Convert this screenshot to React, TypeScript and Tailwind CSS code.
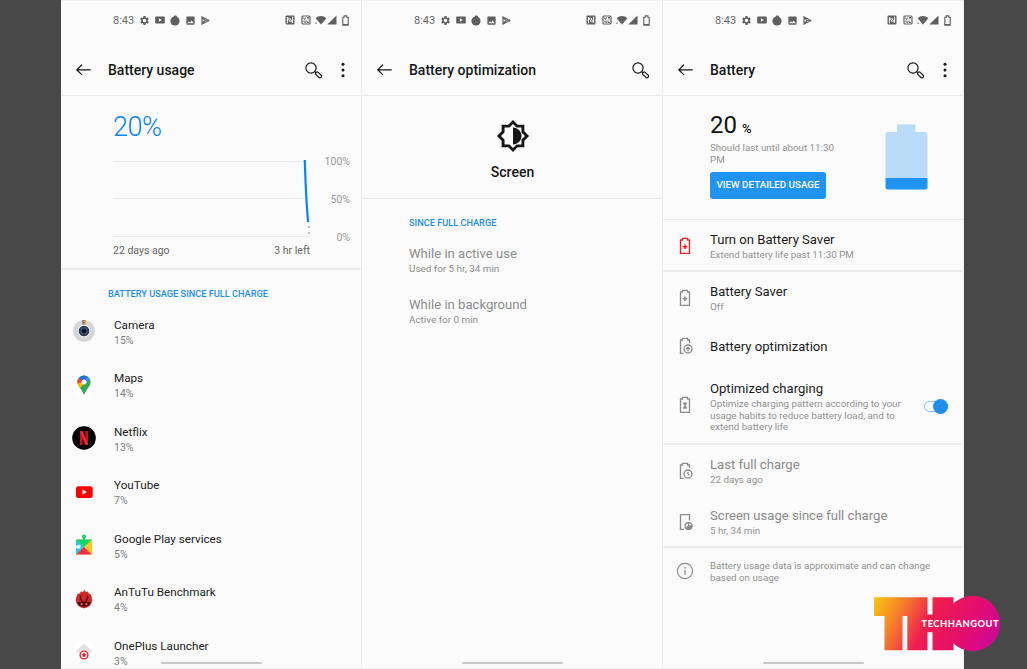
import React from "react";
import { MdImage, MdOutlineBrightnessMedium, MdSettings } from "react-icons/md";

const StatusBar: React.FC = () => {
  return (
    <div className="flex h-10 items-center justify-between pl-[52px] pr-[12px] text-[#5f5f5f]">
      <div className="flex items-center">
        <span className="w-[26px] text-[11px] leading-none text-[#6a6a6a]">8:43</span>
        <MdSettings className="size-[11px]" />
        <svg className="ml-[5px]" width="10" height="8" viewBox="0 0 10 8">
          <path
            fill="currentColor"
            fillRule="evenodd"
            d="M1.2.4h7.6c.6 0 1 .4 1 1v5.200c0 .6-.4 1-1 1H1.200c-.6 0-1-.4-1-1V1.400c0-.6.4-1 1-1zM3.900 2.200v3.600L6.900 4z"
          />
        </svg>
        <svg className="ml-[5px]" width="10" height="11" viewBox="0 0 10 11">
          <circle cx="5" cy="6" r="4.600" fill="currentColor" />
          <path d="M3.200 2.500 4.700.2l2.300.8-.3 1.500z" fill="currentColor" />
        </svg>
        <MdImage className="ml-[5px] size-[11px]" />
        <svg className="ml-[5px]" width="9" height="9" viewBox="0 0 9 9">
          <path d="M1 1v7L4.200 4.500zM1 1l5 2.500M1 8l5-2.500" fill="none" stroke="currentColor" strokeWidth="1.200" />
          <path d="M5 4.500 6.900 2.900 8.700 4.500 6.900 6.100z" fill="currentColor" />
        </svg>
      </div>
      <div className="flex items-center">
        <svg width="10" height="10" viewBox="0 0 10 10">
          <rect x=".5" y=".5" width="9" height="9" rx="1" fill="currentColor" />
          <path d="M2.400 8.300V2l3 5.200M7.600 1.700V8L4.700 2.800" fill="none" stroke="#fbfbfb" />
        </svg>
        <svg className="ml-[6px]" width="10" height="10" viewBox="0 0 10 10">
          <rect x="1" y="1" width="8" height="8" rx="1" fill="none" stroke="currentColor" strokeWidth="1.200" />
          <path d="m2.300 2.500 1.200 2 1.200-2M6 2.500h2M7 2.500v2M2.300 6.200h2.500M3.500 7.500h1.300M6 5.500v2h1.800" fill="none" stroke="currentColor" />
        </svg>
        <svg className="ml-[4px]" width="12" height="10" viewBox="0 0 12 10">
          <path d="M.6 3.200a8 8 0 0 1 10.800 0L6 9.500z" fill="currentColor" />
          <path d="M1 7.500v1.500" stroke="currentColor" />
        </svg>
        <svg width="10" height="10" viewBox="0 0 10 10">
          <path d="M9.500.4v9.200H.3z" fill="currentColor" />
        </svg>
        <svg className="ml-[5px]" width="7" height="11" viewBox="0 0 7 11">
          <path
            d="M.8 2.200h1.400V.9h2.600v1.300h1.400v7.900H.8z"
            fill="none"
            stroke="currentColor"
            strokeWidth="1.100"
          />
          <path d="M1 9.500h5" stroke="currentColor" />
        </svg>
      </div>
    </div>
  );
};

interface PhoneProps {
  title: string;
  menu?: boolean;
  children: React.ReactNode;
}

const Phone: React.FC<PhoneProps> = ({ title, menu, children }) => {
  return (
    <section className="relative h-full w-[301px] shrink-0 overflow-hidden border-r border-y border-[#efefef] bg-[#fbfbfb]">
      <header className="-mt-px h-24 border-b border-[#e8e8e8]">
        <StatusBar />
        <div className="flex h-[55px] items-center pl-[15px] pr-[13px] pt-[5px] text-[#161616]">
          <svg width="16" height="12" viewBox="0 0 16 12">
            <path d="M14.700 5.800H.7M6 .7.7 5.800 6 10.900" fill="none" stroke="currentColor" strokeWidth="1.200" />
          </svg>
          <h1 className="ml-4 flex-1 text-[14px] font-medium leading-none">{title}</h1>
          <svg width="17" height="17" viewBox="0 0 17 17" fill="none" stroke="currentColor">
            <circle cx="6" cy="6" r="5.100" strokeWidth="1.200" />
            <path d="m9.700 9.600 1.300 1.200" strokeWidth="1.200" />
            <rect x="10.200" y="11.400" width="6.800" height="3.100" rx="1.300" transform="rotate(43 13.600 13)" strokeWidth="1.200" />
          </svg>
          {menu && (
            <svg className="ml-[18px] mr-[2px]" width="6" height="16" viewBox="0 0 6 16" fill="currentColor">
              <circle cx="3" cy="2.300" r="1.500" />
              <circle cx="3" cy="8" r="1.500" />
              <circle cx="3" cy="13.700" r="1.500" />
            </svg>
          )}
        </div>
      </header>
      {children}
      <div className="absolute bottom-[4px] left-[100px] h-[2px] w-[101px] rounded-full bg-[#c9c9c9]" />
    </section>
  );
};

const CameraIcon = () => (
  <svg width="24" height="24" viewBox="0 0 24 24">
    <circle cx="12" cy="12" r="10.800" fill="#d6d6d8" />
    <path d="M10 1h1.500v4.500H10z" fill="#22b8d8" />
    <path d="M11.300 1h1.500v4.500h-1.500z" fill="#e8402a" />
    <path d="M12.700 1h1.300v4.500h-1.300z" fill="#f3b32c" />
    <circle cx="12" cy="12" r="6.300" fill="#f4f4f4" />
    <circle cx="12" cy="12" r="5.300" fill="#26364f" />
    <circle cx="12" cy="12" r="3.400" fill="#4a6a8e" />
    <circle cx="12" cy="12" r="2.500" fill="#0c1526" />
  </svg>
);

const MapsIcon = () => (
  <svg width="24" height="24" viewBox="0 0 24 24">
    <defs>
      <clipPath id="pin">
        <path d="M12 2.500a6.600 6.600 0 0 1 6.600 6.600c0 2.400-1.200 4-2.600 5.800-1.600 2-2.600 3.400-3.100 5.700-.3 1.100-1.500 1.100-1.800 0-.5-2.300-1.500-3.700-3.100-5.700-1.400-1.800-2.600-3.400-2.600-5.800A6.600 6.600 0 0 1 12 2.500z" />
      </clipPath>
    </defs>
    <circle cx="12" cy="12" r="11.500" fill="#fff" />
    <g clipPath="url(#pin)">
      <path d="M0 0h24v24H0z" fill="#34a853" />
      <path d="m0 17 6.500 0 12-14H0z" fill="#fbbc04" />
      <path d="M0 11.500 12 9 9 3 0 0z" fill="#ea4335" />
      <path d="M6.500 4.500 12 9l5.500-6.500L12 0z" fill="#1a73e8" />
      <path d="m12 9 6-6.500L20 5l-5 5z" fill="#4285f4" />
    </g>
    <circle cx="12" cy="9" r="2.500" fill="#fff" />
  </svg>
);

const NetflixIcon = () => (
  <svg width="24" height="24" viewBox="0 0 24 24">
    <circle cx="12" cy="12" r="11.800" fill="#000" />
    <path d="M8 5h2.700v13.800L8 19.100zM13.300 5H16v14.100l-2.700-.3z" fill="#c4121b" />
    <path d="M8 5h2.700L16 19.100l-2.700-.3z" fill="#f02833" />
  </svg>
);

const YouTubeIcon = () => (
  <svg width="24" height="24" viewBox="0 0 24 24">
    <rect x="3.900" y="6.200" width="16.800" height="11.800" rx="2.500" fill="#f00" />
    <path d="m10.500 9.500 4.300 2.600-4.300 2.600z" fill="#fff" />
  </svg>
);

const PlayServicesIcon = () => (
  <svg width="24" height="24" viewBox="0 0 24 24">
    <path d="M4 6.500h16v15H4z" fill="#ffca28" />
    <path d="M4 6.500v15l8-7.500z" fill="#1fc8f5" />
    <path d="M4 6.500h16L12 14z" fill="#12d66b" />
    <path d="M4 21.500h16L12 14z" fill="#f0324b" />
    <circle cx="12" cy="3.500" r="2" fill="#12d66b" />
    <path d="M11 4.500h2v3h-2z" fill="#12d66b" />
    <circle cx="6.600" cy="13.800" r="2.100" fill="#fbfbfb" />
    <path d="M3.500 12.800h2.500v2H3.500z" fill="#fbfbfb" />
  </svg>
);

const AntutuIcon = () => (
  <svg width="24" height="24" viewBox="0 0 24 24">
    <path
      d="M4.500 11 5.500 6.500l2 1L9 4l1.500 1.500 2-2.700L14 5l2-.5.5 2.500 2 0 1 4-7.500 2z"
      fill="#e5423a"
    />
    <circle cx="12" cy="13" r="8.200" fill="#cf2a28" />
    <path d="M5 15.500C7 14 17 14 19 15.500a7.800 7.800 0 0 1-14 0z" fill="#4b1115" />
    <path d="M8.500 8.500c-.5 3 .5 4.500 2 5.500M15.500 8.500c.5 3-.5 4.500-2 5.500" fill="none" stroke="#5b1518" strokeWidth="1.500" />
    <circle cx="9.600" cy="17" r="1.200" fill="#d9534a" />
    <circle cx="14.400" cy="17" r="1.200" fill="#d9534a" />
  </svg>
);

const LauncherIcon = () => (
  <svg width="24" height="24" viewBox="0 0 24 24">
    <circle cx="12" cy="12" r="11.500" fill="#fff" />
    <path d="m12 3.500 8 7.500-2 2H6l-2-2z" fill="#e3e3e3" />
    <circle cx="12" cy="15" r="4.800" fill="#fff" />
    <circle cx="12" cy="15" r="3.900" fill="#fff" stroke="#e32127" strokeWidth="1.400" />
    <circle cx="12" cy="15" r="1.900" fill="#e32127" />
  </svg>
);

const apps = [
  { name: "Camera", usage: "15%", icon: <CameraIcon /> },
  { name: "Maps", usage: "14%", icon: <MapsIcon /> },
  { name: "Netflix", usage: "13%", icon: <NetflixIcon /> },
  { name: "YouTube", usage: "7%", icon: <YouTubeIcon /> },
  { name: "Google Play services", usage: "5%", icon: <PlayServicesIcon /> },
  { name: "AnTuTu Benchmark", usage: "4%", icon: <AntutuIcon /> },
  { name: "OnePlus Launcher", usage: "3%", icon: <LauncherIcon /> },
];

const UsageScreen: React.FC = () => {
  return (
    <Phone title="Battery usage" menu>
      <div className="h-[174px] border-b-2 border-[#ececec] pl-[52px] pr-[11px] pt-[15px]">
        <div className="text-[27px] font-light leading-8 tracking-[-0.5px] text-[#0a84f0]">20%</div>
        <div className="mt-[13px] flex justify-between">
          <div className="w-[197px]">
            <svg width="197" height="84" viewBox="0 0 197 84" fill="none">
              <path d="M0 5.500h193M0 42.500h195M0 80.500h197" stroke="#e6e6e6" />
              <path d="M191.800 4c.6 20 1.700 45 3.300 62" stroke="#0a84f0" strokeWidth="2.200" />
              <path d="M196 70v2M196 76v2" stroke="#aaa" strokeWidth="1.500" />
            </svg>
            <div className="mt-[3px] flex justify-between text-[10.5px] leading-4 text-[#666]">
              <span>22 days ago</span>
              <span>3 hr left</span>
            </div>
          </div>
          <div className="flex h-[88px] flex-col justify-between text-right text-[10.5px] leading-[12px] text-[#999]">
            <span>100%</span>
            <span>50%</span>
            <span>0%</span>
          </div>
        </div>
      </div>
      <h2 className="pl-[47px] pt-[18px] text-[9.2px] font-medium leading-3 text-[#1c8ef0]">
        BATTERY USAGE SINCE FULL CHARGE
      </h2>
      <ul className="pt-[6px]">
        {apps.map((app) => (
          <li key={app.name} className="flex h-[53.5px] items-center pl-[11px]">
            <div className="mb-[3px] w-[42px]">{app.icon}</div>
            <div>
              <div className="text-[11.7px] leading-[15px] text-[#222]">{app.name}</div>
              <div className="text-[10.5px] leading-[15px] text-[#808080]">{app.usage}</div>
            </div>
          </li>
        ))}
      </ul>
    </Phone>
  );
};

const OptimizationScreen: React.FC = () => {
  return (
    <Phone title="Battery optimization">
      <div className="flex h-[103px] flex-col items-center border-b border-[#e6e6e6] pl-px pt-[23px] text-[#161616]">
        <MdOutlineBrightnessMedium className="size-[34px]" />
        <div className="mt-[11px] text-[14px] font-medium leading-4">Screen</div>
      </div>
      <div className="pl-[47px] pt-[18px] text-[#8c8c8c]">
        <h2 className="text-[9.2px] font-medium leading-3 text-[#1c8ef0]">SINCE FULL CHARGE</h2>
        <div className="mt-[17px] text-[13.1px] leading-[15px]">While in active use</div>
        <div className="text-[9.9px] leading-[15px]">Used for 5 hr, 34 min</div>
        <div className="mt-[21px] text-[13.1px] leading-[15px]">While in background</div>
        <div className="text-[9.9px] leading-[15px]">Active for 0 min</div>
      </div>
    </Phone>
  );
};

type Glyph = "plus" | "arrow" | "hourglass" | "clock" | "screen" | "info";

const RowIcon: React.FC<{ glyph: Glyph }> = ({ glyph }) => {
  if (glyph === "info") {
    return (
      <svg width="18" height="18" viewBox="0 0 18 18" fill="none" stroke="currentColor">
        <circle cx="9" cy="9" r="7.600" strokeWidth="1.100" />
        <path d="M9 7.800v5M9 5v1.400" strokeWidth="1.300" />
      </svg>
    );
  }
  const whole = glyph === "plus" || glyph === "hourglass";
  return (
    <svg width="18" height="18" viewBox="0 0 18 18" fill="none" stroke="currentColor" strokeWidth="1.300">
      {whole && <path d="M4.500 3h2V1.400h5V3h2v13.400h-9z" strokeLinejoin="round" />}
      {glyph === "plus" && <path d="M9 7.500v4.400M6.800 9.700h4.400" strokeWidth="1.500" />}
      {glyph === "hourglass" && (
        <path d="M7.200 6.900h3.600L9 9.600l1.800 2.700H7.200L9 9.600z" fill="currentColor" strokeWidth=".8" />
      )}
      {(glyph === "arrow" || glyph === "clock") && (
        <>
          <path d="M7.500 16.400h-3V3h2V1.400h5V3h2v3" />
          <circle cx="12" cy="12" r="4" />
        </>
      )}
      {glyph === "arrow" && <path d="M12 14.300v-4M10.200 12 12 10.200l1.800 1.800" />}
      {glyph === "clock" && <path d="M12 9.800V12l1.400 1.300" />}
      {glyph === "screen" && (
        <>
          <path d="M8 16.400H4.500V1.600h9v6" />
          <circle cx="12.500" cy="13" r="3.400" />
          <path d="M12.500 9.600V13h3.400a3.400 3.400 0 0 1-5.800 2.400l2.400-2.400" fill="currentColor" />
        </>
      )}
    </svg>
  );
};

interface RowProps {
  glyph: Glyph;
  title?: string;
  detail?: string;
  className?: string;
  iconClass?: string;
  compact?: boolean;
  children?: React.ReactNode;
}

const Row: React.FC<RowProps> = ({ glyph, title, detail, className, iconClass, compact, children }) => {
  return (
    <div className={`flex items-center pl-[13px] ${className ?? ""}`}>
      <div className={`w-[34px] shrink-0 ${iconClass ?? "mb-[3px] text-[#8a8a8a]"}`}>
        <RowIcon glyph={glyph} />
      </div>
      <div className="flex-1">
        {title && <div className="text-[13.1px] leading-[15px]">{title}</div>}
        {detail && (
          <div className={`text-[9.8px] text-[#929292] ${compact ? "pt-[2px] leading-[11.5px]" : "leading-[15px]"}`}>
            {detail}
          </div>
        )}
      </div>
      {children}
    </div>
  );
};

const BatteryScreen: React.FC = () => {
  return (
    <Phone title="Battery" menu>
      <div className="flex h-[124px] items-start justify-between border-b border-[#ebebeb] pl-[47px] pr-[35px] pt-[17px]">
        <div className="w-[130px]">
          <div className="flex h-6 items-baseline gap-[5px] text-[24px] leading-6 text-[#111]">
            <span>20</span>
            <span className="text-[13px] font-medium leading-none">%</span>
          </div>
          <p className="mt-[5px] text-[9.8px] leading-[11.5px] text-[#929292]">Should last until about 11:30 PM</p>
          <button className="mt-[7px] flex h-[27px] w-[116px] items-center justify-center whitespace-nowrap rounded-[3px] bg-[#2094f3] text-[9.8px] font-medium text-white">
            VIEW DETAILED USAGE
          </button>
        </div>
        <svg className="mt-[11px]" width="43" height="66" viewBox="0 0 43 66">
          <path d="M12 .5h18.500V8H40a2.500 2.500 0 0 1 2.500 2.500V54H.5V10.500A2.500 2.500 0 0 1 3 8h9z" fill="#badcf9" />
          <path d="M.5 54h42v9a2.500 2.500 0 0 1-2.500 2.500H3A2.500 2.500 0 0 1 .5 63z" fill="#2094f3" />
        </svg>
      </div>
      <div className="h-[52px] border-b-2 border-[#ececec] pt-[12px] text-[#1c1c1c]">
        <Row
          glyph="plus"
          title="Turn on Battery Saver"
          detail="Extend battery life past 11:30 PM"
          iconClass="mb-[3px] text-[#ee1c1c]"
        />
      </div>
      <div className="h-[173px] border-b-2 border-[#ececec] pt-[12px] text-[#1c1c1c]">
        <Row glyph="plus" title="Battery Saver" detail="Off" />
        <Row glyph="arrow" title="Battery optimization" className="mt-[23px]" iconClass="text-[#8a8a8a]" />
        <Row
          glyph="hourglass"
          title="Optimized charging"
          detail="Optimize charging pattern according to your usage habits to reduce battery load, and to extend battery life"
          className="mt-[26px] pr-[15px]"
          compact
        >
          <div className="mb-px ml-[18px] flex h-[11px] w-[24px] shrink-0 items-center justify-end rounded-full border border-[#7fbdf2]">
            <div className="-mr-px size-[15px] shrink-0 rounded-full bg-[#1f8fee]" />
          </div>
        </Row>
      </div>
      <div className="h-[103px] border-b-2 border-[#ececec] pt-[12px] text-[#8a8a8a]">
        <Row glyph="clock" title="Last full charge" detail="22 days ago" />
        <Row glyph="screen" title="Screen usage since full charge" detail="5 hr, 34 min" className="mt-[21px]" />
      </div>
      <Row
        glyph="info"
        detail="Battery usage data is approximate and can change based on usage"
        className="mt-[10px] pr-[28px]"
        iconClass="text-[#8a8a8a]"
        compact
      />
    </Phone>
  );
};

const Watermark: React.FC = () => {
  return (
    <svg className="absolute left-[873px] top-[594px]" width="130" height="60" viewBox="0 0 130 60">
      <defs>
        <linearGradient id="brand" gradientUnits="userSpaceOnUse" x1="0" y1="3" x2="115" y2="60">
          <stop offset="0" stopColor="#fbc80e" />
          <stop offset=".22" stopColor="#f5842a" />
          <stop offset=".46" stopColor="#ee1f4e" />
          <stop offset=".75" stopColor="#e50d6c" />
          <stop offset="1" stopColor="#cd0796" />
        </linearGradient>
      </defs>
      <g fill="url(#brand)">
        <path d="M1 3.300h53.500v17.200h5V3.300h21v52.900h-21V38.300h-5v17.900H34.300V22h-4.800v34.200h-18V22H1z" />
        <circle cx="99.500" cy="29.500" r="27.700" />
      </g>
      <text
        x="48.500"
        y="32.700"
        fill="#fff"
        textLength="77"
        className="font-[Lato,sans-serif] text-[9.3px] font-black"
      >
        TECHHANGOUT
      </text>
    </svg>
  );
};

export default function App() {
  return (
    <div className="relative flex h-[669px] w-[1027px] justify-center overflow-hidden bg-[#484848] pr-[2px] font-[Roboto,sans-serif]">
      <UsageScreen />
      <OptimizationScreen />
      <BatteryScreen />
      <Watermark />
    </div>
  );
}
